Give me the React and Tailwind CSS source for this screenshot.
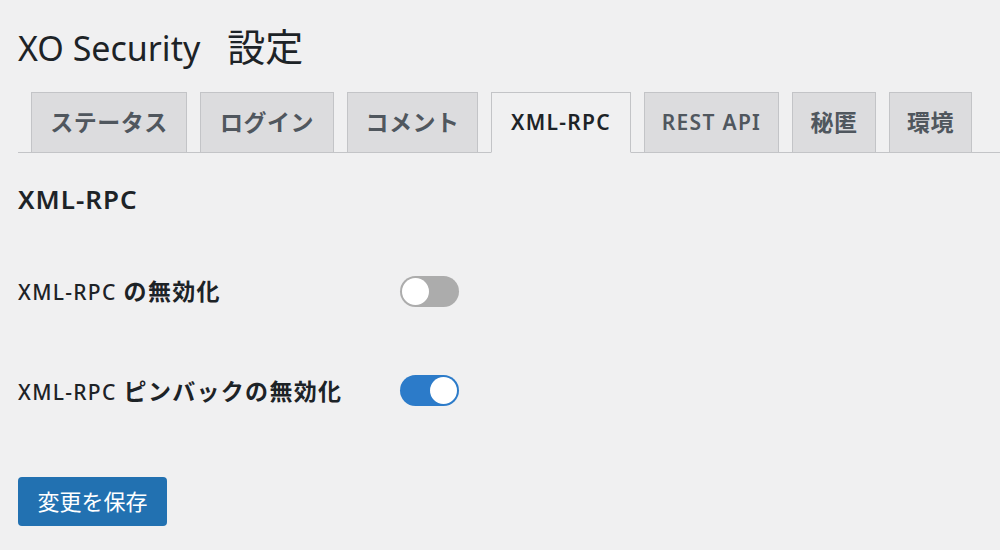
import React, { useState } from "react";

const tabs = [
  { label: "ステータス", w: "w-[156px]", latin: false },
  { label: "ログイン", w: "w-[134px]", latin: false },
  { label: "コメント", w: "w-[131px]", latin: false },
  { label: "XML-RPC", w: "w-[140px]", latin: true },
  { label: "REST API", w: "w-[135px]", latin: true },
  { label: "秘匿", w: "w-[84px]", latin: false },
  { label: "環境", w: "w-[83px]", latin: false },
];

const Toggle = ({ on, onClick }) => (
  <button
    onClick={onClick}
    className={`flex h-[31px] w-[59px] items-center rounded-full px-[2px] ${
      on ? "justify-end bg-[#2c7bc9]" : "justify-start bg-[#acacac]"
    }`}
  >
    <span className="block h-[27px] w-[27px] rounded-full bg-white" />
  </button>
);

// latin part + japanese part, the latin one a bit lighter as in the shot
const Label = ({ latin, ja }) => (
  <span className="w-[382px] whitespace-nowrap">
    <span className="text-[21px] font-medium tracking-[1.3px]">{latin}</span>
    <span className="ml-[7px] text-[23px] font-bold tracking-[1.3px]">{ja}</span>
  </span>
);

const App = () => {
  const [active, setActive] = useState(3);
  const [xmlOff, setXmlOff] = useState(false);
  const [pingOff, setPingOff] = useState(true);

  return (
    <div className="min-h-[550px] w-[1000px] overflow-hidden bg-[#f0f0f1] pl-[18px] font-['Noto_Sans','Noto_Sans_CJK_JP',sans-serif] text-[#1d2327]">
      <h1 className="flex items-baseline pt-[24px] text-[34px] leading-[44px] font-normal text-[#1d2327]">
        XO Security
        <span className="ml-[27px] text-[38px]">設定</span>
      </h1>

      <nav className="mt-[22px] flex h-[61px] gap-[13px] border-b border-[#c3c4c7] pl-[13px]">
        {tabs.map((t, i) => (
          <button
            key={t.label}
            onClick={() => setActive(i)}
            className={`${t.w} -mb-px flex h-[61px] items-center justify-center border font-semibold ${
              t.latin ? "text-[21px] tracking-[1.3px]" : "text-[23px] tracking-[0.5px]"
            } ${
              i === active
                ? "border-[#c3c4c7] border-b-[#f0f0f1] bg-[#f0f0f1] text-[#1d2327]"
                : "border-[#c3c4c7] bg-[#dcdcde] text-[#50575e]"
            }`}
          >
            {t.label}
          </button>
        ))}
      </nav>

      <h2 className="mt-[28px] text-[26px] leading-[36px] font-semibold tracking-[1px]">XML-RPC</h2>

      <div className="mt-[57px] flex items-center">
        <Label latin="XML-RPC" ja="の無効化" />
        <Toggle on={xmlOff} onClick={() => setXmlOff(!xmlOff)} />
      </div>

      <div className="mt-[65px] flex items-center">
        <Label latin="XML-RPC" ja="ピンバックの無効化" />
        <Toggle on={pingOff} onClick={() => setPingOff(!pingOff)} />
      </div>

      <button className="mt-[69px] flex h-[49px] w-[149px] items-center justify-center rounded-[4px] bg-[#2271b1] text-[22px] text-white">
        変更を保存
      </button>
    </div>
  );
};

export default App;
